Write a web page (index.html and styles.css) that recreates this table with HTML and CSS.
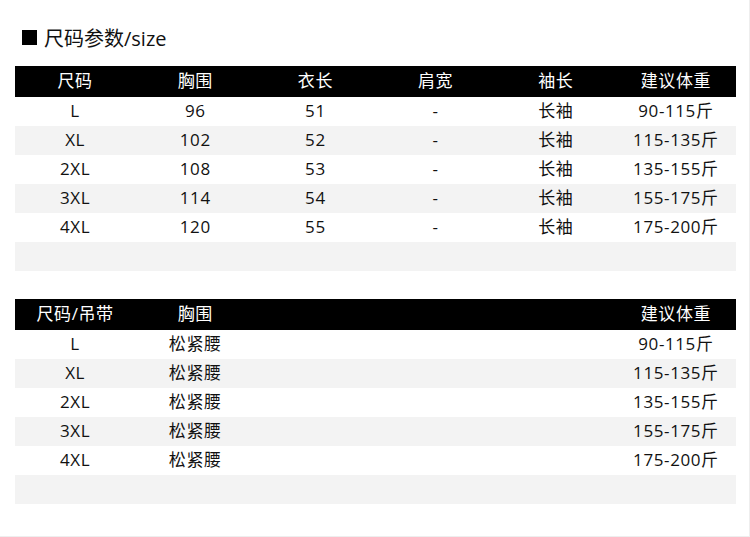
FILE: index.html
```html
<!DOCTYPE html>
<html>
<head>
<meta charset="utf-8">
<link rel="stylesheet" href="styles.css">
</head>
<body>
<div class="page">
  <h1 class="title"><span class="sq"></span>尺码参数/size</h1>
  <div class="table">
    <div class="row head"><div>尺码</div><div>胸围</div><div>衣长</div><div>肩宽</div><div>袖长</div><div>建议体重</div></div>
    <div class="row"><div>L</div><div>96</div><div>51</div><div>-</div><div>长袖</div><div>90-115斤</div></div>
    <div class="row alt"><div>XL</div><div>102</div><div>52</div><div>-</div><div>长袖</div><div>115-135斤</div></div>
    <div class="row"><div>2XL</div><div>108</div><div>53</div><div>-</div><div>长袖</div><div>135-155斤</div></div>
    <div class="row alt"><div>3XL</div><div>114</div><div>54</div><div>-</div><div>长袖</div><div>155-175斤</div></div>
    <div class="row"><div>4XL</div><div>120</div><div>55</div><div>-</div><div>长袖</div><div>175-200斤</div></div>
    <div class="row alt"><div></div><div></div><div></div><div></div><div></div><div></div></div>
  </div>
  <div class="table second">
    <div class="row head"><div>尺码/吊带</div><div>胸围</div><div></div><div></div><div></div><div>建议体重</div></div>
    <div class="row"><div>L</div><div>松紧腰</div><div></div><div></div><div></div><div>90-115斤</div></div>
    <div class="row alt"><div>XL</div><div>松紧腰</div><div></div><div></div><div></div><div>115-135斤</div></div>
    <div class="row"><div>2XL</div><div>松紧腰</div><div></div><div></div><div></div><div>135-155斤</div></div>
    <div class="row alt"><div>3XL</div><div>松紧腰</div><div></div><div></div><div></div><div>155-175斤</div></div>
    <div class="row"><div>4XL</div><div>松紧腰</div><div></div><div></div><div></div><div>175-200斤</div></div>
    <div class="row alt"><div></div><div></div><div></div><div></div><div></div><div></div></div>
  </div>
</div>
</body>
</html>
```
FILE: styles.css
```css
html, body {
  margin: 0;
  padding: 0;
  background: #fff;
}
body {
  font-family: "Open Sans", "Noto Sans CJK SC", sans-serif;
  color: #111;
}
.page {
  width: 750px;
  height: 537px;
  box-sizing: border-box;
  padding: 22px 13px 0 15px;
  border-right: 1px solid #eeeeee;
  border-bottom: 1px solid #eeeeee;
}
.title {
  display: flex;
  align-items: center;
  margin: 0 0 0 7px;
  height: 30px;
  font-size: 20px;
  font-weight: normal;
  color: #111;
}
.sq {
  display: inline-block;
  width: 15px;
  height: 15px;
  background: #000;
  margin-right: 7px;
}
.table {
  margin-top: 14px;
  width: 721px;
}
.table.second {
  margin-top: 28px;
}
.row {
  display: grid;
  grid-template-columns: repeat(6, 1fr);
  height: 29px;
  align-items: center;
  font-size: 17px;
  letter-spacing: 0.6px;
  text-align: center;
  line-height: 1;
}
.row > div {
  padding-top: 0;
  margin-top: -2px;
}
.row.head {
  background: #000;
  color: #fff;
  height: 31px;
}
.row.alt {
  background: #f3f3f3;
}
```
